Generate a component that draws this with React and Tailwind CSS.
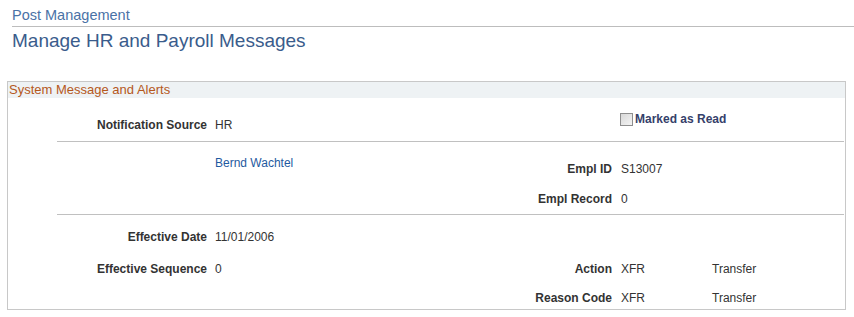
import React from "react";

const Label = ({ children, className = "" }) => (
  <div className={`text-right font-bold text-[12px] leading-[20px] text-[#333333] ${className}`}>
    {children}
  </div>
);

const Value = ({ children, className = "", color = "text-[#333333]" }) => (
  <div className={`text-[12px] leading-[20px] ${color} ${className}`}>{children}</div>
);

export default function App() {
  return (
    <div className="w-[854px] h-[317px] bg-white overflow-hidden font-['Liberation_Sans',Arial,sans-serif]">
      {/* page titles */}
      <div className="pl-[12px] pt-[5px]">
        <div className="text-[14.5px] leading-[20px] text-[#4a72a6]">Post Management</div>
        <div className="h-px bg-[#bdbdbd] mt-[1px]" />
        <div className="text-[19px] leading-[26px] text-[#3a5c8c] mt-[1px]">
          Manage HR and Payroll Messages
        </div>
      </div>

      {/* group box */}
      <div className="ml-[7px] mt-[27px] w-[839px] h-[229px] border border-[#c8c8c8]">
        <div className="h-[16px] bg-[#eef2f4] text-[13px] leading-[16px] text-[#b5581c] pl-[1px]">
          System Message and Alerts
        </div>

        {/* row A */}
        <div className="h-[43px] flex items-start">
          <Label className="w-[199px] mt-[17px]">Notification Source</Label>
          <Value className="ml-[8px] w-[250px] mt-[17px]">HR</Value>
          <div className="ml-[155px] mt-[11px] flex items-center gap-[2px]">
            <span className="w-[13px] h-[13px] border border-[#8e8e8e] bg-gradient-to-br from-[#d8d8d8] to-[#f4f4f4]" />
            <span className="font-bold text-[12px] leading-[20px] text-[#35406a]">Marked as Read</span>
          </div>
        </div>
        <div className="ml-[49px] w-[787px] h-px bg-[#c0c0c0]" />

        {/* row B */}
        <div className="h-[72px] flex items-start">
          <Value className="ml-[207px] w-[250px] mt-[11px]" color="text-[#1f5aa0]">
            Bernd Wachtel
          </Value>
          <div className="flex flex-col mt-[17px] gap-[10px]">
            <div className="flex">
              <Label className="w-[147px]">Empl ID</Label>
              <Value className="ml-[9px]">S13007</Value>
            </div>
            <div className="flex">
              <Label className="w-[147px]">Empl Record</Label>
              <Value className="ml-[9px]">0</Value>
            </div>
          </div>
        </div>
        <div className="ml-[49px] w-[787px] h-px bg-[#c0c0c0]" />

        {/* row C */}
        <div className="flex flex-col pt-[12px]">
          <div className="flex">
            <Label className="w-[199px]">Effective Date</Label>
            <Value className="ml-[8px]">11/01/2006</Value>
          </div>
          <div className="flex mt-[12px]">
            <Label className="w-[199px]">Effective Sequence</Label>
            <Value className="ml-[8px] w-[250px]">0</Value>
            <Label className="w-[147px]">Action</Label>
            <Value className="ml-[9px] w-[91px]">XFR</Value>
            <Value>Transfer</Value>
          </div>
          <div className="flex mt-[9px]">
            <div className="w-[457px]" />
            <Label className="w-[147px]">Reason Code</Label>
            <Value className="ml-[9px] w-[91px]">XFR</Value>
            <Value>Transfer</Value>
          </div>
        </div>
      </div>
    </div>
  );
}
